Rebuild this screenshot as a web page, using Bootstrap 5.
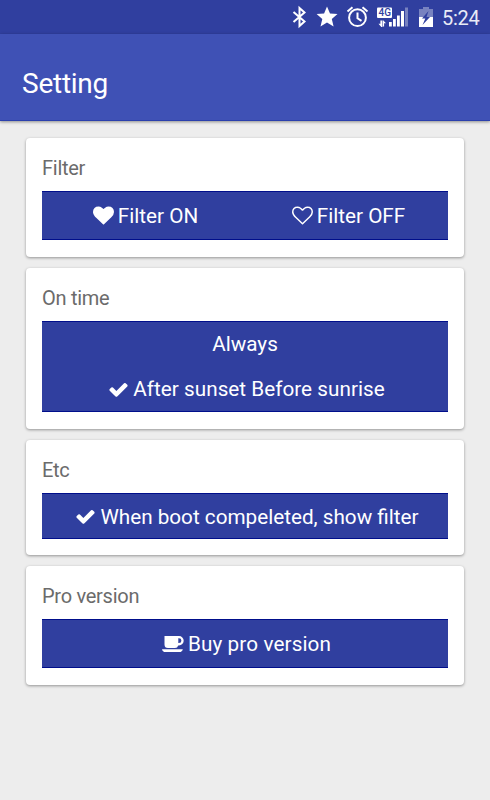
<!DOCTYPE html>
<html lang="en">
<head>
<meta charset="utf-8">
<meta name="viewport" content="width=device-width, initial-scale=1">
<title>Setting</title>
<link href="https://cdn.jsdelivr.net/npm/bootstrap@5.3.0/dist/css/bootstrap.min.css" rel="stylesheet">
<style>
body{font-family:Roboto,sans-serif;background:#ededed;min-height:800px;overflow:hidden}
svg{display:block;flex:none;fill:currentColor}
.status-bar{height:34px;background:#303f9f;padding:0 11px 0 0;font-size:20px}
.status-bar .status-icons{width:152px;height:34px}
.status-bar .clock{width:37px;line-height:34px;padding-top:2px;color:#e9ebf6;letter-spacing:-.3px}
.app-bar{height:87px;background:#3f51b5;padding:14px 22px 0;border-bottom:1px solid #2b40ad;box-shadow:0 1px 3px rgba(0,0,0,.4)}
.app-bar h1{font-size:28px;font-weight:400;letter-spacing:-.25px}
.settings{padding:17px 26px 0;gap:11px}
.panel{border-radius:4px;padding:16px;box-shadow:0 1px 3px rgba(0,0,0,.38);height:119px}
.panel h2{font-size:20px;font-weight:400;letter-spacing:-.27px;line-height:28px;color:#6b6b6b;margin:0 0 9px}
.panel-time{height:161px}
.panel-etc{height:115px}
.choices{background:#303f9f;border-top:1px solid #000e8b;border-bottom:1px solid #000e8b;height:49px}
.panel-time .choices{height:91px}
.panel-etc .choices{height:46px}
.choice{background:none;border:0;padding:1px 0 0 4px;color:#fff;font-size:20.7px;line-height:24px;gap:4px;white-space:nowrap}
.choice-plain{padding:0}
.choice-sunset{padding:2px 0 0 3px;letter-spacing:.03px}
.choice-wide{letter-spacing:.12px;padding-left:3px}
.icon-up{margin-top:-1px}
</style>
<script src="https://cdn.jsdelivr.net/npm/bootstrap@5.3.0/dist/js/bootstrap.bundle.min.js"></script>
</head>
<body>
<div class="status-bar d-flex align-items-center justify-content-end text-white">
  <svg class="status-icons" viewBox="290 0 152 34">
    <path d="M293.5 12l11 9.500-5 4.500V8l5 4.500-11 9.500" fill="none" stroke="#fff" stroke-width="2"/>
    <path d="M327 6.500l3 7 7.500.6-5.700 5 1.800 7.400-6.600-4-6.500 4 1.800-7.400-5.700-5 7.500-.6z"/>
    <g fill="none" stroke="#fff" stroke-width="2">
      <circle cx="357.500" cy="17.700" r="8.400"/>
      <path d="M357.500 12.500v5.800l4 2.500M347.500 11.500l5-4.300M367.500 11.500l-5-4.300"/>
    </g>
    <rect x="377" y="7.500" width="15" height="10.500" rx="1"/>
    <text x="378.500" y="16.300" font-size="10" font-weight="500" fill="#303f9f" textLength="12.500" lengthAdjust="spacingAndGlyphs">4G</text>
    <path d="M381.300 27l-2.800-3.300h1.900V20.500h2V27zM382.900 20l3.100 3.300h-1.900v3.200h-1.200z"/>
    <path d="M389 22h2.800v4.500H389zM393 19h2.800v7.500H393zM397 15.500h2.800v11H397zM401 11h3v15.500h-3z"/>
    <path d="M405 7.500h3v19h-3z" fill="#7882c0"/>
    <path d="M419 9h4V7h6v2h4v8h-14z" fill="#7882c0"/>
    <path d="M419 17h14v10h-14z"/>
    <path d="M428.500 11l-6.500 7.500h3.300L422.500 25l7.500-8h-3.500z" fill="#303f9f"/>
  </svg>
  <span class="clock">5:24</span>
</div>
<header class="app-bar d-flex align-items-center text-white position-relative"><h1 class="mb-0">Setting</h1></header>
<main class="settings d-flex flex-column">
  <section class="panel bg-white">
    <h2>Filter</h2>
    <div class="choices d-flex">
      <button class="choice d-flex flex-fill w-50 align-items-center justify-content-center">
        <svg class="icon-up" width="21" height="21" viewBox="0 0 1792 1792"><path d="M896 1664q-26 0-44-18l-624-602q-10-8-27.500-26t-55.500-65.500-68-97.500-53.500-121-23.500-138q0-220 127-344t351-124q62 0 126.500 21.500t120 58 95.500 68.500 76 68q36-36 76-68t95.500-68.500 120-58 126.500-21.500q224 0 351 124t127 344q0 221-229 450l-623 600q-18 18-44 18z"/></svg>
        <span>Filter ON</span>
      </button>
      <button class="choice d-flex flex-fill w-50 align-items-center justify-content-center">
        <svg class="icon-up" width="21" height="21" viewBox="0 0 1792 1792"><path d="M1664 596q0-81-21.500-143t-55-98.500-81.500-59.500-94-31-98-8-112 25.500-110.500 64-86.500 72-60 61.500q-18 22-49 22t-49-22q-24-28-60-61.500t-86.500-72-110.500-64-112-25.500-98 8-94 31-81.500 59.500-55 98.500-21.500 143q0 168 187 355l581 560 580-559q188-188 188-356zm128 0q0 221-229 450l-623 600q-18 18-44 18t-44-18l-624-602q-10-8-27.500-26t-55.500-65.500-68-97.500-53.500-121-23.500-138q0-220 127-344t351-124q62 0 126.500 21.500t120 58 95.500 68.500 76 68q36-36 76-68t95.500-68.500 120-58 126.500-21.500q224 0 351 124t127 344z"/></svg>
        <span>Filter OFF</span>
      </button>
    </div>
  </section>
  <section class="panel panel-time bg-white">
    <h2>On time</h2>
    <div class="choices d-flex flex-column">
      <button class="choice choice-plain d-flex flex-fill align-items-center justify-content-center">Always</button>
      <button class="choice choice-sunset d-flex flex-fill align-items-center justify-content-center">
        <svg width="21" height="21" viewBox="0 0 1792 1792"><path d="M1671 566q0 40-28 68l-724 724-136 136q-28 28-68 28t-68-28l-136-136-362-362q-28-28-28-68t28-68l136-136q28-28 68-28t68 28l294 295 656-657q28-28 68-28t68 28l136 136q28 28 28 68z"/></svg>
        <span>After sunset Before sunrise</span>
      </button>
    </div>
  </section>
  <section class="panel panel-etc bg-white">
    <h2>Etc</h2>
    <div class="choices d-flex">
      <button class="choice d-flex flex-fill align-items-center justify-content-center">
        <svg class="icon-up" width="21" height="21" viewBox="0 0 1792 1792"><path d="M1671 566q0 40-28 68l-724 724-136 136q-28 28-68 28t-68-28l-136-136-362-362q-28-28-28-68t28-68l136-136q28-28 68-28t68 28l294 295 656-657q28-28 68-28t68 28l136 136q28 28 28 68z"/></svg>
        <span>When boot compeleted, show filter</span>
      </button>
    </div>
  </section>
  <section class="panel bg-white">
    <h2>Pro version</h2>
    <div class="choices d-flex">
      <button class="choice choice-wide d-flex flex-fill align-items-center justify-content-center">
        <svg width="22" height="21" viewBox="0 0 22 21"><path fill-rule="evenodd" d="M2.500 2H17a4.700 4.700 0 0 1 0 9.400h-.8A3.500 3.500 0 0 1 13 14H6a3.500 3.500 0 0 1-3.500-3.500zM16.300 4.300v4.800h.7a2.400 2.400 0 0 0 0-4.800zM0 15.200h20.800q-.5 2.800-3.500 2.800H3.500Q.5 18 0 15.200z"/></svg>
        <span>Buy pro version</span>
      </button>
    </div>
  </section>
</main>
</body>
</html>
